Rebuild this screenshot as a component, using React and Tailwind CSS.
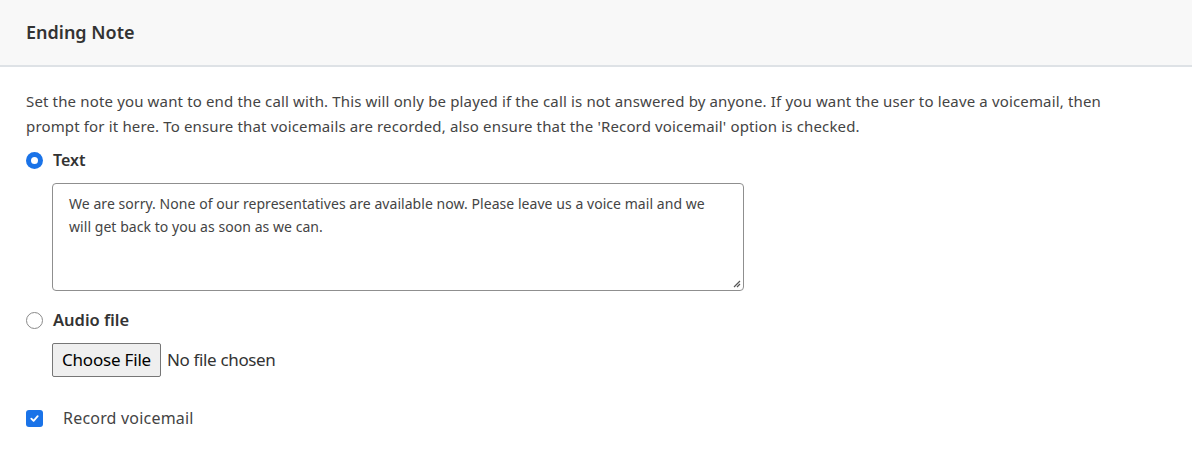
import React from "react";

const font = { fontFamily: '"Noto Sans", "Open Sans", sans-serif' };

const Radio = ({ checked }) =>
  checked ? (
    <span className="flex h-[17px] w-[17px] items-center justify-center rounded-full bg-[#1a73e8]">
      <span className="h-[7px] w-[7px] rounded-full bg-white" />
    </span>
  ) : (
    <span className="h-[17px] w-[17px] rounded-full border border-[#8a8a8a] bg-white" />
  );

const App = () => {
  return (
    <div className="w-[1192px] h-[460px] bg-white text-[#444]" style={font}>
      {/* header */}
      <div className="h-[67px] flex items-center px-[26px] bg-[#f8f8f8] border-b-2 border-[#dee2e6]">
        <h2 className="text-[18px] font-semibold text-[#333]">Ending Note</h2>
      </div>

      <div className="px-[26px] pt-[22px]">
        <p className="text-[15px] leading-[25px] tracking-[0.15px] whitespace-nowrap">
          Set the note you want to end the call with. This will only be played if the call is not answered by anyone. If you want the user to leave a voicemail, then
          <br />
          prompt for it here. To ensure that voicemails are recorded, also ensure that the 'Record voicemail' option is checked.
        </p>

        <label className="mt-[11px] flex items-center gap-[10px] h-[20px]">
          <Radio checked />
          <span className="text-[16px] font-semibold text-[#333]">Text</span>
        </label>

        <div className="ml-[26px] mt-[13px] w-[692px] h-[108px] rounded-[4px] border border-[#8f8f8f] px-[16px] pt-[8px] relative">
          <p className="text-[14px] leading-[23px] tracking-[0.05px] text-[#444]">
            We are sorry. None of our representatives are available now. Please leave us a voice mail and we
            <br />
            will get back to you as soon as we can.
          </p>
          <svg className="absolute right-[2px] bottom-[2px]" width="9" height="9" viewBox="0 0 9 9">
            <path d="M8 2L2 8M8 5L5 8" stroke="#555" strokeWidth="1.2" />
          </svg>
        </div>

        <label className="mt-[19px] flex items-center gap-[10px] h-[20px]">
          <Radio />
          <span className="text-[16.5px] font-semibold text-[#333]">Audio file</span>
        </label>

        <div className="ml-[26px] mt-[13px] flex items-center gap-[6px]">
          <button className="h-[34px] px-[9px] bg-[#efefef] border border-[#767676] rounded-[2px] text-[17px] text-black tracking-[-0.2px]">
            Choose File
          </button>
          <span className="text-[17px] text-[#333] tracking-[-0.35px]">No file chosen</span>
        </div>

        <label className="mt-[31px] flex items-center gap-[20px] h-[20px]">
          <span className="flex h-[17px] w-[17px] items-center justify-center rounded-[3px] bg-[#1a73e8]">
            <svg width="11" height="11" viewBox="0 0 12 12">
              <path d="M2.5 6.2L5 8.5L9.5 3.5" fill="none" stroke="white" strokeWidth="2" strokeLinecap="round" strokeLinejoin="round" />
            </svg>
          </span>
          <span className="text-[16px] text-[#444] tracking-[0.2px]">Record voicemail</span>
        </label>
      </div>
    </div>
  );
};

export default App;
